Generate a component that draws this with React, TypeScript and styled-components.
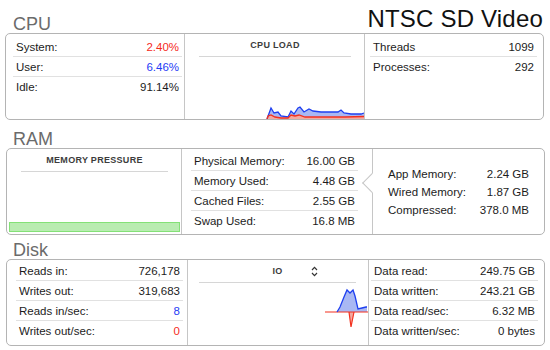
import { createGlobalStyle } from "styled-components";
import styled from "styled-components";

const GlobalStyle = createGlobalStyle`
  html, body {
    margin: 0;
    padding: 0;
    background: #ffffff;
  }
  body {
    font-family: "Liberation Sans", Arial, sans-serif;
    color: #1c1c1c;
  }
`;

interface Stat {
  label: string;
  value: string;
  color?: string;
}

const cpuStats: Stat[] = [
  { label: "System:", value: "2.40%", color: "#f52a1c" },
  { label: "User:", value: "6.46%", color: "#1f3cf5" },
  { label: "Idle:", value: "91.14%" },
];

const taskStats: Stat[] = [
  { label: "Threads", value: "1099" },
  { label: "Processes:", value: "292" },
];

const memStats: Stat[] = [
  { label: "Physical Memory:", value: "16.00 GB" },
  { label: "Memory Used:", value: "4.48 GB" },
  { label: "Cached Files:", value: "2.55 GB" },
  { label: "Swap Used:", value: "16.8 MB" },
];

const memDetail: Stat[] = [
  { label: "App Memory:", value: "2.24 GB" },
  { label: "Wired Memory:", value: "1.87 GB" },
  { label: "Compressed:", value: "378.0 MB" },
];

const diskOps: Stat[] = [
  { label: "Reads in:", value: "726,178" },
  { label: "Writes out:", value: "319,683" },
  { label: "Reads in/sec:", value: "8", color: "#1f3cf5" },
  { label: "Writes out/sec:", value: "0", color: "#f52a1c" },
];

const diskData: Stat[] = [
  { label: "Data read:", value: "249.75 GB" },
  { label: "Data written:", value: "243.21 GB" },
  { label: "Data read/sec:", value: "6.32 MB" },
  { label: "Data written/sec:", value: "0 bytes" },
];

export default function App() {
  return (
    <>
      <GlobalStyle />
      <Page>
        <Watermark>NTSC SD Video</Watermark>

        <Section $top={15}>
          <SectionTitle>CPU</SectionTitle>
          <Panel $cols="178px 180px 1fr">
            <Column>
              <StatList stats={cpuStats} inset="3px 2px 0 7px" />
            </Column>
            <Column>
              <GraphBox>
                <GraphTitle>CPU Load</GraphTitle>
                <GraphArea>
                  <CpuGraph />
                </GraphArea>
              </GraphBox>
            </Column>
            <Column>
              <StatList stats={taskStats} inset="3px 6px 0 5px" />
            </Column>
          </Panel>
        </Section>

        <Section $top={10}>
          <SectionTitle>RAM</SectionTitle>
          <Panel $cols="174px 191px 1fr" $left={6}>
            <Column>
              <GraphBox>
                <GraphTitle>Memory Pressure</GraphTitle>
                <GraphArea>
                  <PressureBar />
                </GraphArea>
              </GraphBox>
            </Column>
            <Column>
              <StatList stats={memStats} inset="2px 14px 0 9px" />
            </Column>
            <Column $notch>
              <DetailList>
                {memDetail.map((s) => (
                  <DetailRow key={s.label}>
                    <span>{s.label}</span>
                    <span>{s.value}</span>
                  </DetailRow>
                ))}
              </DetailList>
            </Column>
          </Panel>
        </Section>

        <Section $top={6}>
          <SectionTitle>Disk</SectionTitle>
          <Panel $cols="180px 181px 1fr" $left={6}>
            <Column>
              <StatList stats={diskOps} inset="1px 4px 0 9px" />
            </Column>
            <Column>
              <GraphBox>
                <IoTitle>
                  <span />
                  <GraphTitle as="span" $bare>
                    IO
                  </GraphTitle>
                  <Stepper />
                </IoTitle>
                <GraphArea>
                  <IoGraph />
                </GraphArea>
              </GraphBox>
            </Column>
            <Column>
              <StatList stats={diskData} inset="1px 6px 0 2px" />
            </Column>
          </Panel>
        </Section>
      </Page>
    </>
  );
}

function StatList({ stats, inset }: { stats: Stat[]; inset: string }) {
  return (
    <Rows $inset={inset}>
      {stats.map((s) => (
        <Row key={s.label}>
          <span>{s.label}</span>
          <Value $color={s.color}>{s.value}</Value>
        </Row>
      ))}
    </Rows>
  );
}

function CpuGraph() {
  // sampled load, svg sits on the bottom 20px of the column
  const blue =
    "82,20 86,9 89,14 93,13 96,17 103,18 106,12 109,15 113,9 115,8 119,13 124,10 128,12 136,13 153,13 156,11 159,14 166,15 176,15 179,14";
  const red =
    "82,20 83,17 86,16 90,18 96,19 103,19 106,16 110,17 114,16 120,18 130,18 150,18 160,18 179,17.5";
  return (
    <BottomSvg width="180" height="20" viewBox="0 0 180 20">
      <polygon points={`${blue} 179,20`} fill="#a9b8f3" />
      <polygon points={`${red} 179,20`} fill="#f4a9a0" />
      <polyline points={blue} fill="none" stroke="#1e3ff0" strokeWidth="1.3" />
      <polyline points={red} fill="none" stroke="#f3301e" strokeWidth="1.3" />
    </BottomSvg>
  );
}

function IoGraph() {
  const blue = "149,29 152,24 156,14 159,7 162,10 165,7 167,13 170,26 174,25 178,24 179,24";
  return (
    <BottomSvg width="181" height="62" viewBox="0 0 181 62">
      <polygon points={`${blue} 179,29`} fill="#a9b8f3" />
      <polygon points="161,29 163,44 166,29" fill="#f4a9a0" />
      <line x1="137" y1="29" x2="180" y2="29" stroke="#f3301e" strokeWidth="1.2" />
      <polyline points="161,29 163,44 166,29" fill="none" stroke="#f3301e" strokeWidth="1.2" />
      <polyline points={blue} fill="none" stroke="#1e3ff0" strokeWidth="1.3" />
    </BottomSvg>
  );
}

function Stepper() {
  return (
    <StepperIcon width="7" height="11" viewBox="0 0 7 11">
      <path d="M1 4 L3.5 1.4 L6 4" fill="none" stroke="#333" strokeWidth="1.2" />
      <path d="M1 7 L3.5 9.6 L6 7" fill="none" stroke="#333" strokeWidth="1.2" />
    </StepperIcon>
  );
}

const Page = styled.div`
  position: relative;
  width: 550px;
  height: 350px;
  overflow: hidden;
  display: flex;
  flex-direction: column;
`;

const Watermark = styled.div`
  position: absolute;
  top: 5px;
  right: 7px;
  font-size: 24px;
  line-height: 28px;
  color: #111;
  letter-spacing: 0.2px;
`;

const Section = styled.section<{ $top: number }>`
  margin-top: ${(p) => p.$top}px;
  display: flex;
  flex-direction: column;
`;

const SectionTitle = styled.h2`
  margin: 0 0 0 13px;
  font-size: 18px;
  line-height: 18px;
  font-weight: normal;
  color: #6b6b6b;
`;

const Panel = styled.div<{ $cols: string; $left?: number }>`
  box-sizing: border-box;
  margin-left: ${(p) => p.$left ?? 5}px;
  width: 539px;
  height: 87px;
  display: grid;
  grid-template-columns: ${(p) => p.$cols};
  border: 1px solid #b4b4b4;
  border-radius: 5px;
  background: #fff;
`;

const Column = styled.div<{ $notch?: boolean }>`
  position: relative;
  min-width: 0;
  display: flex;
  flex-direction: column;

  & + & {
    border-left: 1px solid #c6c6c6;
  }

  ${(p) =>
    p.$notch &&
    `
    &::before {
      content: "";
      position: absolute;
      left: -8px;
      top: 27px;
      width: 13px;
      height: 13px;
      background: #fff;
      border-left: 1px solid #c6c6c6;
      border-bottom: 1px solid #c6c6c6;
      transform: rotate(45deg);
    }
  `}
`;

const Rows = styled.div<{ $inset: string }>`
  padding: ${(p) => p.$inset};
  display: flex;
  flex-direction: column;
`;

const Row = styled.div`
  box-sizing: border-box;
  height: 20px;
  padding: 0 3px;
  display: flex;
  align-items: center;
  justify-content: space-between;
  font-size: 11.5px;
  border-bottom: 1px solid #e1e1e1;

  &:last-child {
    border-bottom: none;
  }
`;

const Value = styled.span<{ $color?: string }>`
  color: ${(p) => p.$color ?? "#1c1c1c"};
`;

const DetailList = styled.div`
  flex: 1;
  padding: 0 15px 0 15px;
  display: flex;
  flex-direction: column;
  justify-content: center;
`;

const DetailRow = styled.div`
  height: 18px;
  display: flex;
  align-items: center;
  justify-content: space-between;
  font-size: 11.5px;
`;

const GraphBox = styled.div`
  flex: 1;
  display: flex;
  flex-direction: column;
  min-height: 0;
`;

const GraphTitle = styled.div<{ $bare?: boolean }>`
  margin: ${(p) => (p.$bare ? "0" : "0 13px 0 14px")};
  padding: ${(p) => (p.$bare ? "0" : "6px 0 5px")};
  border-bottom: ${(p) => (p.$bare ? "none" : "1px solid #d6d6d6")};
  font-size: 9px;
  line-height: 11px;
  font-weight: bold;
  letter-spacing: 0.3px;
  text-transform: uppercase;
  text-align: center;
  color: #3c3c3c;
`;

const IoTitle = styled.div`
  margin: 0 12px 0 11px;
  padding: 6px 0 5px;
  border-bottom: 1px solid #d6d6d6;
  display: grid;
  grid-template-columns: 1fr auto 1fr;
  align-items: center;
  height: 11px;
`;

const StepperIcon = styled.svg`
  margin-left: 28px;
  display: block;
`;

const GraphArea = styled.div`
  flex: 1;
  display: flex;
  flex-direction: column;
  justify-content: flex-end;
  min-height: 0;
`;

const BottomSvg = styled.svg`
  display: block;
`;

const PressureBar = styled.div`
  box-sizing: border-box;
  height: 10px;
  margin: 0 1px 2px 2px;
  background: #b9ecb1;
  border: 1px solid #84e177;
`;
